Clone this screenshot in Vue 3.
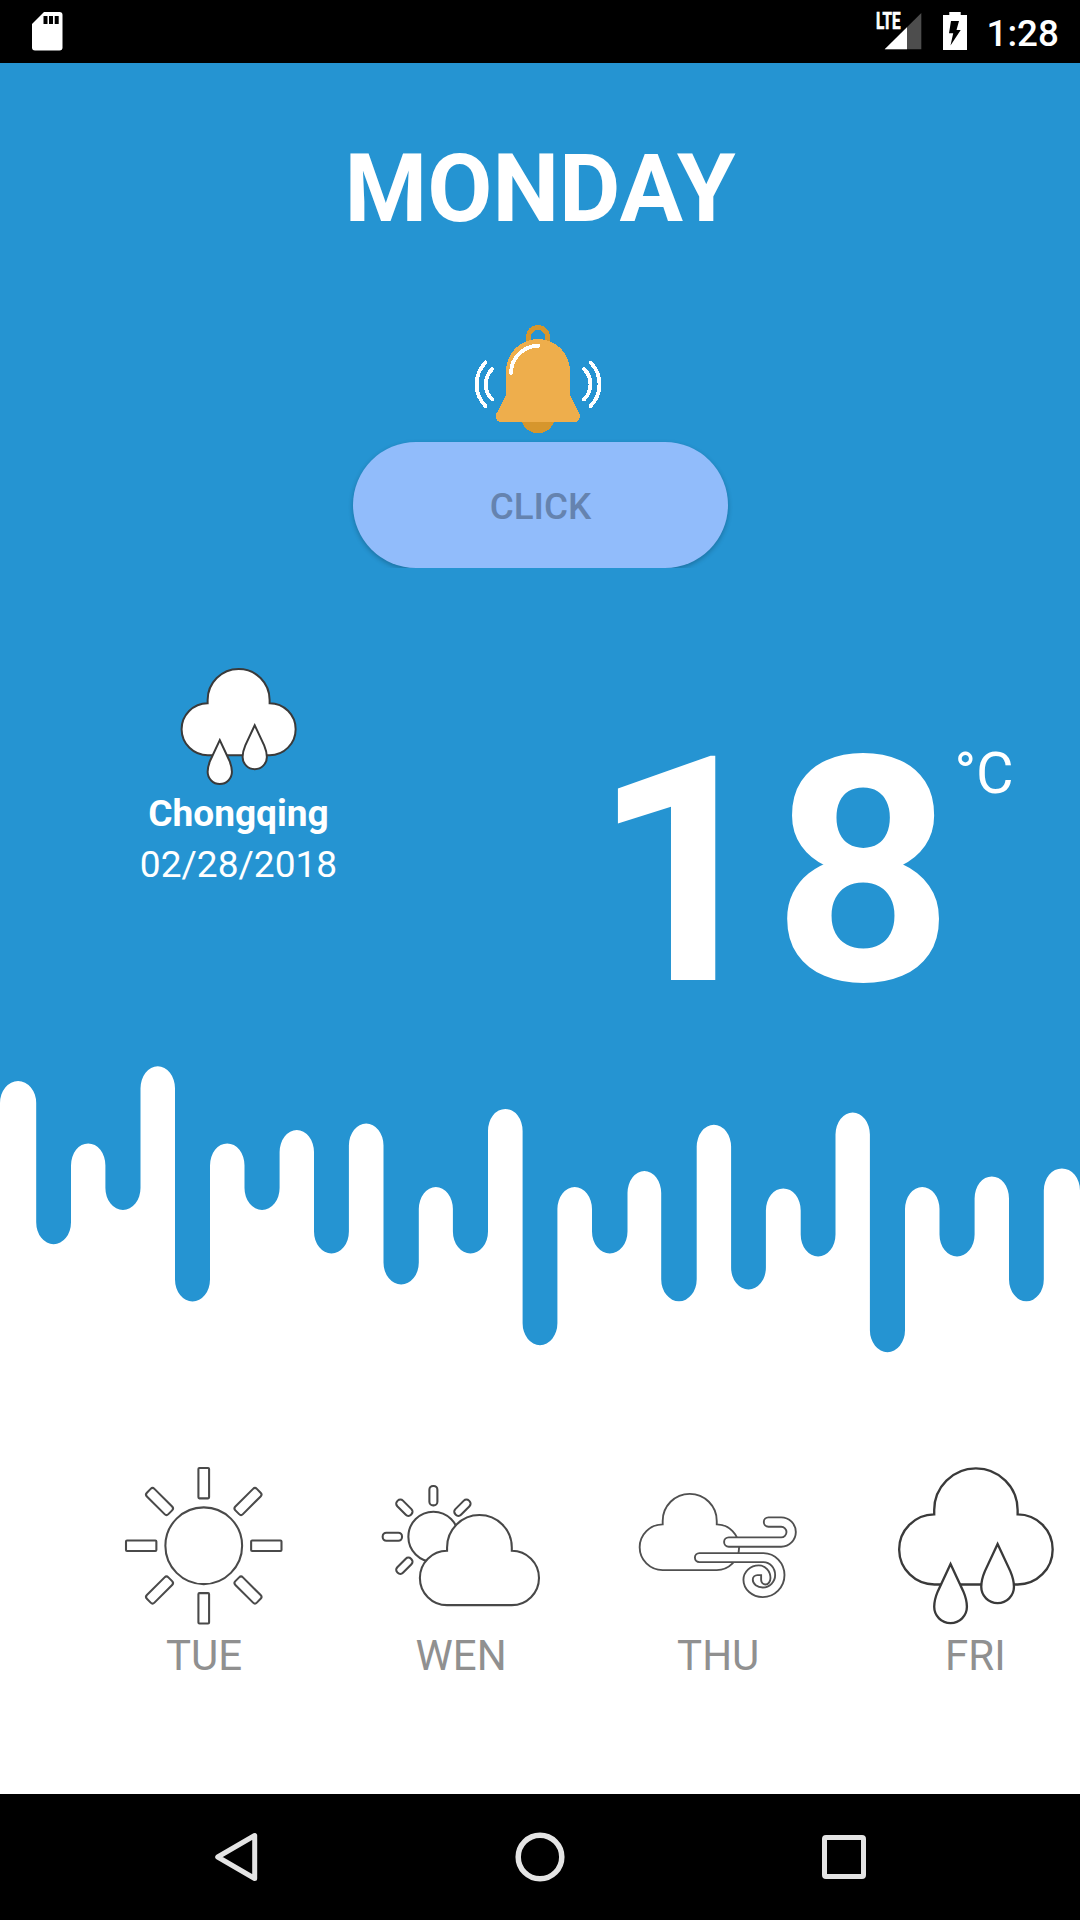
<script setup>
const forecast = [
  { day: 'TUE', icon: 'sun' },
  { day: 'WEN', icon: 'partly' },
  { day: 'THU', icon: 'wind' },
  { day: 'FRI', icon: 'rain' },
]

// Vertical edges between neighbouring drips
const edges = [
  0, 36.2, 71, 105.4, 140.5, 175, 210, 244.5, 279.6, 314, 348.9, 383.5, 418.8, 452.9, 488, 522.6,
  557.4, 592, 627.5, 661.2, 696.7, 731.1, 765.9, 800.7, 835.5, 869.9, 905, 939.5, 974.6, 1009,
  1043.8, 1080,
]
// Alternating heights: white crest, blue drip, white crest...
const tips = [
  18, 181.3, 80.4, 147, 3.3, 238.5, 80.4, 147, 67.1, 190.5, 60.5, 221.5, 124.1, 190.5, 45.9, 282.2,
  124.1, 190.5, 108.1, 238.3, 61.8, 226.5, 125.4, 193.5, 49.6, 289.2, 124.1, 193.5, 113.4, 238.3, 105.4,
]
const RY = 22
const drip = (() => {
  let d = 'M0 0V' + (tips[0] + RY)
  tips.forEach((tip, i) => {
    const crest = i % 2 === 0
    const rx = (edges[i + 1] - edges[i]) / 2
    const y = crest ? tip + RY : tip - RY
    d += `V${y}A${rx} ${RY} 0 0 ${crest ? 1 : 0} ${edges[i + 1]} ${y}`
  })
  return d + 'V0Z'
})()
</script>

<template>
  <div class="screen">
    <header class="status">
      <svg class="sd" width="31" height="39" viewBox="0 0 31 39">
        <path d="M12 0H27.5Q30.5 0 30.5 3V35.5Q30.5 38.5 27.5 38.5H3Q0 38.5 0 35.5V12Z" fill="#fff" />
        <path d="M11.5 4h4v8h-4zM17 4h4v8h-4zM22.7 4h4v8h-4z" fill="#000" />
      </svg>
      <div class="status-right">
        <svg class="signal" width="46" height="38" viewBox="0 0 46 38">
          <path d="M45.3 1V37.3H8.7Z" fill="#4d4d4d" />
          <path d="M31 15.2V37.3H8.7Z" fill="#fff" />
          <path d="M0 0H26V14L22 18H0Z" fill="#000" />
          <text x="0" y="17.3" textLength="24.5" lengthAdjust="spacingAndGlyphs" class="lte">LTE</text>
        </svg>
        <svg class="battery" width="24" height="38" viewBox="0 0 24 38">
          <path d="M6.3 0H17.7V3H24V38H0V3H6.3Z" fill="#fff" />
          <path d="M8 9H16L13.5 18H17.7L7.5 33.5L10.2 21.3H6Z" fill="#000" />
        </svg>
        <span class="clock">1:28</span>
      </div>
    </header>

    <main class="hero">
      <h1 class="title">MONDAY</h1>
      <svg class="bell" width="128" height="110" viewBox="0 0 128 110" shape-rendering="crispEdges">
        <path d="M52.5 20V13A9.5 9.5 0 0 1 71.5 13V20" fill="none" stroke="#d6962d" stroke-width="5" />
        <circle cx="62" cy="92.3" r="17" fill="#d6962d" />
        <path
          d="M30 47A32 32 0 0 1 94 47V71.5L103.3 89.5Q105 94 102 96.5Q101 98 98.5 98H25.5Q23 98 21.5 96.5Q19 94 20.5 89.5L30 71.5Z"
          fill="#eeae4c"
        />
        <g fill="none" stroke="#fff" stroke-width="3.8" stroke-linecap="round">
          <path d="M35 49A27.5 27.5 0 0 1 62.5 21.8" />
          <path d="M9.5 38.5A31 31 0 0 0 9.5 82" />
          <path d="M16.3 45A21 21 0 0 0 16.3 75.5" />
          <path d="M114.6 38.5A31 31 0 0 1 114.6 82" />
          <path d="M107.9 45A21 21 0 0 1 107.9 75.5" />
        </g>
      </svg>
      <button class="click">CLICK</button>

      <section class="now">
        <div class="place">
          <svg class="now-icon" width="117" height="117" viewBox="0 0 472 472">
            <g fill="#fff" stroke="#3a3a3a" stroke-width="8">
              <path d="M113.5 352A106 105 0 0 1 111.5 142V129A125 125 0 0 1 361.5 129V142A105 105 0 0 1 361.5 352Z" />
              <path d="M160.5 291L122.5 372Q111.5 398 111.5 419A49 49 0 0 0 209.5 419Q209.5 398 198.5 372Z" />
              <path d="M301.5 231L263.5 312Q252.5 338 252.5 359A49 49 0 0 0 350.5 359Q350.5 338 339.5 312Z" />
            </g>
          </svg>
          <div class="city">Chongqing</div>
          <div class="date">02/28/2018</div>
        </div>
        <div class="temp">18</div>
        <div class="unit">°C</div>
      </section>
    </main>

    <svg class="drips" width="1080" height="291" viewBox="0 0 1080 291">
      <path :d="drip" fill="#2594d2" />
    </svg>

    <section class="forecast">
      <div v-for="item in forecast" :key="item.day" class="day">
        <svg width="157.5" height="157.5" viewBox="0 0 472 472">
          <g v-if="item.icon === 'sun'" fill="#fff" stroke="#4a4a4a" stroke-width="6.2">
            <circle cx="236" cy="236" r="115" />
            <rect
              v-for="n in 8"
              :key="n"
              x="220"
              y="3"
              width="32"
              height="91"
              :rx="n % 2 ? 8 : 3"
              :transform="`rotate(${n * 45} 236 236)`"
            />
          </g>
          <g v-else-if="item.icon === 'partly'" fill="#fff" stroke="#484848" stroke-width="6.2">
            <circle cx="154" cy="209" r="75" />
            <rect
              v-for="a in [-135, -90, -45, 0, 45]"
              :key="a"
              x="142"
              y="57"
              width="24"
              height="58"
              rx="11"
              :transform="`rotate(${a} 154 209)`"
            />
            <path d="M195 414A81.5 81.5 0 0 1 195 251V241A97 97 0 0 1 389 241V251A81.5 81.5 0 0 1 389 414Z" />
          </g>
          <g
            v-else-if="item.icon === 'wind'"
            fill="#fff"
            stroke="#505050"
            stroke-width="5.6"
            transform="translate(-59 -52)"
          >
            <path d="M130 361A69 68.5 0 0 1 130 224V213.5A81 81 0 0 1 292 213.5V224A67 68.5 0 0 1 292 361Z" />
            <path d="M328 291A14 14 0 0 1 328 263H485A16 16 0 0 0 485 231H447A14 14 0 0 1 447 203H485A44 44 0 0 1 485 291Z" />
            <path
              d="M240 337A13.5 13.5 0 0 1 240 310H432A63 66 0 0 1 495 376A65 66 0 0 1 430 442A58 52 0 0 1 372 390A46 43 0 0 1 418 347A35 38 0 0 1 453 385A15 19 0 0 1 438 404A13 13 0 0 1 425 391V376H414A14 14 0 0 0 400 390A30 23 0 0 0 430 413A37 37 0 0 0 467 376A35 39 0 0 0 432 337Z"
            />
          </g>
          <g v-else fill="#fff" stroke="#3a3a3a" stroke-width="7">
            <path d="M113.5 352A106 105 0 0 1 111.5 142V129A125 125 0 0 1 361.5 129V142A105 105 0 0 1 361.5 352Z" />
            <path d="M160.5 291L122.5 372Q111.5 398 111.5 419A49 49 0 0 0 209.5 419Q209.5 398 198.5 372Z" />
            <path d="M301.5 231L263.5 312Q252.5 338 252.5 359A49 49 0 0 0 350.5 359Q350.5 338 339.5 312Z" />
          </g>
        </svg>
        <span class="label">{{ item.day }}</span>
      </div>
    </section>

    <nav class="nav">
      <svg width="50" height="50" viewBox="0 0 50 50">
        <path d="M6.7 25L43.7 3.5V46.5Z" fill="none" stroke="#e4e4e4" stroke-width="5" stroke-linejoin="round" />
      </svg>
      <svg width="50" height="50" viewBox="0 0 50 50">
        <circle cx="25" cy="25" r="21.8" fill="none" stroke="#e4e4e4" stroke-width="5.5" />
      </svg>
      <svg width="50" height="50" viewBox="0 0 50 50">
        <rect x="5.5" y="5.5" width="39" height="39" rx="1.5" fill="none" stroke="#e4e4e4" stroke-width="5" />
      </svg>
    </nav>
  </div>
</template>

<style>
body {
  margin: 0;
}
</style>

<style scoped>
.screen {
  width: 1080px;
  height: 1920px;
  display: flex;
  flex-direction: column;
  overflow: hidden;
  background: #fff;
  font-family: Roboto, 'Liberation Sans', sans-serif;
}
svg {
  display: block;
  flex: none;
  overflow: visible;
}
.status {
  height: 63px;
  flex: none;
  box-sizing: border-box;
  padding: 12px 23px 0 32px;
  display: flex;
  justify-content: space-between;
  background: #000;
}
.status-right {
  display: flex;
}
.lte {
  font: 700 23px Roboto, sans-serif;
  fill: #fff;
  stroke: #fff;
  stroke-width: 0.7px;
}
.battery {
  margin-left: 21px;
}
.clock {
  margin-left: 19.5px;
  width: 70.5px;
  font-size: 36.75px;
  font-weight: 500;
  line-height: 43px;
  color: #fff;
}
.hero {
  height: 1000px;
  flex: none;
  display: flex;
  flex-direction: column;
  align-items: center;
  background: #2594d2;
  color: #fff;
}
.title {
  margin: 70px 0 0;
  font-size: 94.5px;
  font-weight: 700;
  line-height: 112px;
}
.bell {
  margin-top: 79px;
}
.click {
  width: 375px;
  height: 126px;
  flex: none;
  margin: 8px 0 0 1px;
  padding: 3px 0 0;
  border: 0;
  border-radius: 63px;
  background: #91bcfb;
  box-shadow: 0 2px 5px rgba(0, 0, 0, 0.24);
  clip-path: inset(-10px -10px 0 -10px);
  font: 500 36.75px/123px Roboto, sans-serif;
  color: #6583af;
}
.now {
  width: 1080px;
  display: flex;
  align-items: flex-start;
}
.place {
  width: 220px;
  margin: 100px 0 0 128.5px;
  display: flex;
  flex-direction: column;
  align-items: center;
  font-size: 37.1px;
  line-height: 51px;
  white-space: nowrap;
}
.city {
  margin-top: 3px;
  font-weight: 700;
}
.temp {
  margin: 120px 0 0 243.5px;
  font-size: 315px;
  font-weight: 700;
  line-height: 369px;
}
.unit {
  margin: 171px 0 0 1px;
  font-size: 57.75px;
  line-height: 68px;
}
.forecast {
  flex: 1;
  margin: 113px 0 0 75.5px;
  display: flex;
}
.day {
  width: 257.1px;
  flex: none;
  display: flex;
  flex-direction: column;
  align-items: center;
}
.label {
  margin-top: 6px;
  font-size: 42px;
  line-height: 49px;
  color: #909090;
}
.nav {
  height: 126px;
  flex: none;
  display: flex;
  align-items: center;
  justify-content: center;
  gap: 254px;
  background: #000;
}
</style>
